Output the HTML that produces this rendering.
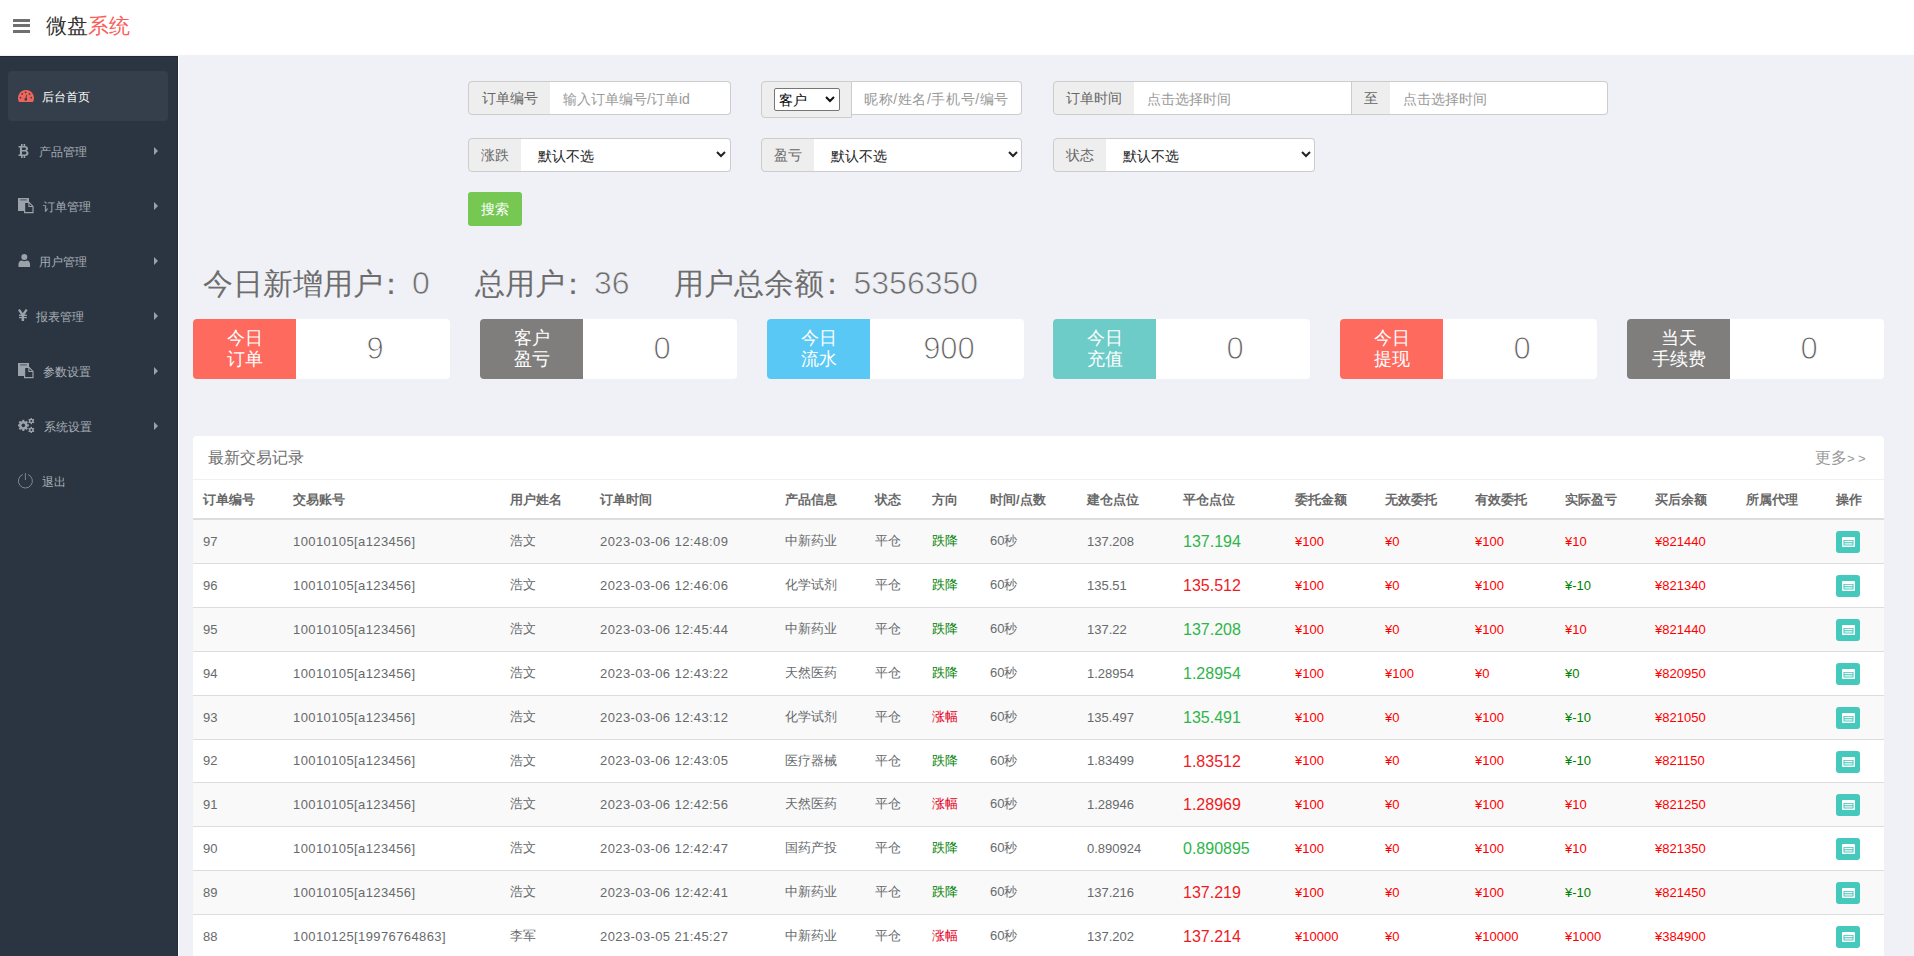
<!DOCTYPE html>
<html><head><meta charset="utf-8">
<style>
*{box-sizing:border-box;margin:0;padding:0}
html,body{width:1914px;height:956px;overflow:hidden;background:#f0f1f6;font-family:"Liberation Sans",sans-serif;color:#676a6c}
.a{position:absolute;white-space:nowrap}
#hdr{position:absolute;left:0;top:0;width:1914px;height:55px;background:#fff}
#hb{position:absolute;left:13px;top:19px;width:17px;height:14px}
#hb i{position:absolute;left:0;width:17px;height:3px;background:#707070}
#logo{position:absolute;left:46px;top:12px;font-size:21px;line-height:28px;color:#333;white-space:nowrap}
#logo span{color:#fb5d5a}
#side{position:absolute;left:0;top:56px;width:178px;height:900px;background:#2a3541;border-right:1px solid #232d39;border-top:1px solid #1f2a36}
#sideline{position:absolute;left:178px;top:55px;width:1px;height:901px;background:#fff}
#act{position:absolute;left:8px;top:71px;width:160px;height:50px;background:#353f4b;border-radius:4px}
.mt{position:absolute;font-size:12px;line-height:16px;color:#a9aeb5;white-space:nowrap}
.ar{position:absolute;left:154px;width:0;height:0;border-left:4px solid #9ba1a9;border-top:4px solid transparent;border-bottom:4px solid transparent}
.ic{position:absolute}
/* filters */
.ad{position:absolute;background:#eee;border:1px solid #ccc;border-radius:4px 0 0 4px;font-size:14px;line-height:20px;color:#666;text-align:center;padding-top:6px}
.in{position:absolute;background:#fff;border:1px solid #ccc;border-left:0;border-radius:0 4px 4px 0;font-size:14px;line-height:20px;color:#999;padding-top:7px;white-space:nowrap}
.in.sq{border-radius:0}
.sel{color:#222}
.chev{position:absolute;top:12px}
#btn{position:absolute;left:468px;top:192px;width:54px;height:34px;background:#76c853;border-radius:3px;color:#fff;font-size:14px;line-height:20px;text-align:center;padding-top:7px}
/* stats */
#stat .cl{font-style:normal;position:relative;left:-7px}
#stat .nm{position:absolute;top:-1px;font-weight:normal;font-size:32px;letter-spacing:0;-webkit-text-stroke:0.7px #f0f1f6}
#stat{position:absolute;left:203px;top:264px;font-size:30px;line-height:40px;color:#6d6d6d;white-space:nowrap}
.card{position:absolute;top:319px;width:257px;height:60px;background:#fff;border-radius:4px;overflow:hidden}
.card .lb{position:absolute;left:0;top:0;width:103px;height:60px;color:#fff;font-size:18px;line-height:20.5px;text-align:center;padding-top:9px}
.card .vl{position:absolute;left:105px;top:0;width:154px;height:60px;font-size:31px;line-height:60px;text-align:center;color:#606060;font-weight:normal;-webkit-text-stroke:1px #fff}
/* table card */
#tc{position:absolute;left:193px;top:436px;width:1691px;height:560px;background:#fff;border-radius:4px}
#tt{position:absolute;left:15px;top:11px;font-size:16px;line-height:22px;color:#6f6f6f}
#more{position:absolute;left:1622px;top:11px;font-size:16px;line-height:22px;color:#999;letter-spacing:0}
#tline{position:absolute;left:0;top:43px;width:1691px;height:1px;background:#eef0f4}
#tb{position:absolute;left:0;top:44px;width:1691px;border-collapse:collapse;table-layout:fixed}
#tb th{height:39px;border-bottom:2px solid #ddd;text-align:left;padding:2px 0 0 10px;font-size:13px;font-weight:bold;color:#686868;white-space:nowrap;vertical-align:middle}
#tb td{border-bottom:1px solid #ddd;padding:0 0 0 10px;font-size:13px;color:#676a6c;white-space:nowrap;vertical-align:middle}
#tb tbody tr:nth-child(odd) td{background:#f9f9f9}
.dg{color:#008000}.dr{color:#e4001b}
.cp{font-size:16px;position:relative;top:1px}.cg{color:#2eb54c}.cr{color:#ee1b24}
.ls{letter-spacing:0.4px}
.rd{color:#f00}.gd{color:#008000}
.ob{display:inline-block;width:24px;height:22px;background:#45c9bd;border-radius:3px;position:relative;top:1px;text-align:center;padding-top:6px;line-height:0}
</style></head><body>
<div id="hdr">
  <div id="hb"><i style="top:0"></i><i style="top:5px"></i><i style="top:11px"></i></div>
  <div id="logo">微盘<span>系统</span></div>
</div>
<div id="sideline"></div>
<div id="side"></div>
<div id="act"></div>
<!-- sidebar icons -->
<svg class="ic" style="left:18px;top:90px" width="16" height="12" viewBox="0 0 16 12"><path d="M1.07 12 A8 8 0 1 1 14.93 12 Z" fill="#f0655b"/><g fill="#353f4b"><circle cx="2.5" cy="7.7" r="0.85"/><circle cx="4.2" cy="3.9" r="0.85"/><circle cx="7.6" cy="2.3" r="0.85"/><circle cx="11.5" cy="3.9" r="0.85"/><circle cx="13.2" cy="7.7" r="0.85"/><circle cx="7.8" cy="9.4" r="1.3"/><path d="M7.3 9.3 L8.2 4.8 L8.9 4.9 L8.4 9.5 Z"/></g></svg>
<div class="mt" style="left:42px;top:88.5px;color:#fff">后台首页</div>

<svg class="ic" style="left:18px;top:144px" width="11" height="14" viewBox="0 0 11 14"><g fill="#9ca2aa"><rect x="3" y="0" width="1.6" height="2.5"/><rect x="5.6" y="0" width="1.6" height="2.5"/><rect x="3" y="11.5" width="1.6" height="2.5"/><rect x="5.6" y="11.5" width="1.6" height="2.5"/><path d="M0.5 2 H6.8 C9 2 10 3.2 10 4.7 C10 5.8 9.3 6.5 8.5 6.8 C9.6 7.1 10.5 8 10.5 9.3 C10.5 11 9.3 12 7.2 12 H0.5 V10.4 H1.9 V3.6 H0.5 Z M4 3.6 V6.1 H6.5 C7.4 6.1 7.9 5.6 7.9 4.85 C7.9 4.1 7.4 3.6 6.5 3.6 Z M4 7.6 V10.4 H6.9 C7.9 10.4 8.4 9.8 8.4 9 C8.4 8.2 7.9 7.6 6.9 7.6 Z"/></g></svg>
<div class="mt" style="left:38.5px;top:144px">产品管理</div>
<div class="ar" style="top:147px"></div>

<svg class="ic" style="left:18px;top:198px" width="16" height="16" viewBox="0 0 16 16"><path d="M0 0 H11 V13 H0 Z" fill="#9ca2aa"/><rect x="2.2" y="1.4" width="6.6" height="1" fill="#2a3541" opacity="0.7"/><path d="M6.6 4.4 H11 L15 8.4 V14.6 H6.6 Z" fill="#2a3541" stroke="#9ca2aa" stroke-width="1.2"/><path d="M10.9 4.6 V8.5 H14.8" fill="none" stroke="#9ca2aa" stroke-width="1.1"/></svg>
<div class="mt" style="left:42.5px;top:199px">订单管理</div>
<div class="ar" style="top:202px"></div>

<svg class="ic" style="left:18px;top:254px" width="13" height="13" viewBox="0 0 13 14"><g fill="#9ca2aa"><circle cx="6.3" cy="3.2" r="3.2"/><path d="M0 14 V11 C0 8.5 1.8 7 3.5 7 C4.4 7.6 5.3 7.9 6.3 7.9 C7.3 7.9 8.2 7.6 9.1 7 C10.8 7 12.5 8.5 12.5 11 V14 Z"/></g></svg>
<div class="mt" style="left:39px;top:254px">用户管理</div>
<div class="ar" style="top:257px"></div>

<svg class="ic" style="left:18px;top:309px" width="10" height="12" viewBox="0 0 10 12"><path d="M0.9 0.6 L4.8 6.2 L8.7 0.6" fill="none" stroke="#9ca2aa" stroke-width="2.3"/><rect x="3.6" y="5.5" width="2.5" height="6.5" fill="#9ca2aa"/><rect x="1" y="5.6" width="7.8" height="1.4" fill="#9ca2aa"/><rect x="1" y="7.9" width="7.8" height="1.3" fill="#9ca2aa"/></svg>
<div class="mt" style="left:36px;top:309px">报表管理</div>
<div class="ar" style="top:312px"></div>

<svg class="ic" style="left:18px;top:363px" width="16" height="16" viewBox="0 0 16 16"><path d="M0 0 H11 V13 H0 Z" fill="#9ca2aa"/><rect x="2.2" y="1.4" width="6.6" height="1" fill="#2a3541" opacity="0.7"/><path d="M6.6 4.4 H11 L15 8.4 V14.6 H6.6 Z" fill="#2a3541" stroke="#9ca2aa" stroke-width="1.2"/><path d="M10.9 4.6 V8.5 H14.8" fill="none" stroke="#9ca2aa" stroke-width="1.1"/></svg>
<div class="mt" style="left:43px;top:364px">参数设置</div>
<div class="ar" style="top:367px"></div>

<svg class="ic" style="left:18px;top:418px" width="17" height="15" viewBox="0 0 17 15"><g fill="#9ca2aa"><circle cx="5.3" cy="7.4" r="4.3"/><rect x="4.30" y="1.80" width="2.00" height="11.20" transform="rotate(0.0 5.30 7.40)"/><rect x="4.30" y="1.80" width="2.00" height="11.20" transform="rotate(45.0 5.30 7.40)"/><rect x="4.30" y="1.80" width="2.00" height="11.20" transform="rotate(90.0 5.30 7.40)"/><rect x="4.30" y="1.80" width="2.00" height="11.20" transform="rotate(135.0 5.30 7.40)"/><circle cx="13.3" cy="3" r="2.3"/><rect x="12.60" y="-0.20" width="1.40" height="6.40" transform="rotate(0.0 13.30 3.00)"/><rect x="12.60" y="-0.20" width="1.40" height="6.40" transform="rotate(60.0 13.30 3.00)"/><rect x="12.60" y="-0.20" width="1.40" height="6.40" transform="rotate(120.0 13.30 3.00)"/><circle cx="13.3" cy="12" r="2.3"/><rect x="12.60" y="8.80" width="1.40" height="6.40" transform="rotate(0.0 13.30 12.00)"/><rect x="12.60" y="8.80" width="1.40" height="6.40" transform="rotate(60.0 13.30 12.00)"/><rect x="12.60" y="8.80" width="1.40" height="6.40" transform="rotate(120.0 13.30 12.00)"/></g><g fill="#2a3541"><circle cx="5.3" cy="7.4" r="1.8"/><circle cx="13.3" cy="3" r="0.9"/><circle cx="13.3" cy="12" r="0.9"/></g></svg>
<div class="mt" style="left:44px;top:419px">系统设置</div>
<div class="ar" style="top:422px"></div>

<svg class="ic" style="left:18px;top:473px" width="15" height="16" viewBox="0 0 15 16"><path d="M4.78 1.51 A7 7 0 1 0 10.02 1.51" fill="none" stroke="#8a9098" stroke-width="0.9"/><path d="M7.4 0 V7" stroke="#8a9098" stroke-width="0.9"/></svg>
<div class="mt" style="left:42px;top:474px">退出</div>

<!-- filters row1 -->
<div class="ad" style="left:468px;top:81px;width:83px;height:34px">订单编号</div>
<div class="in" style="left:550px;top:81px;width:181px;height:34px;padding-left:13px">输入订单编号/订单id</div>

<div class="ad" style="left:761px;top:81px;width:91px;height:37px;border-radius:4px 0 0 4px"></div>
<div class="a" style="left:774px;top:88px;width:66px;height:23px;border:1px solid #767676;border-radius:2px;background:#fff;font-size:14px;line-height:20px;color:#000;padding:1px 0 0 4px">客户</div>
<svg class="a" style="left:825px;top:96px" width="10" height="7" viewBox="0 0 10 7"><path d="M1 1 L5 5 L9 1" fill="none" stroke="#111" stroke-width="2"/></svg>
<div class="in" style="left:852px;top:81px;width:170px;height:34px;padding-left:12px;letter-spacing:0.6px">昵称/姓名/手机号/编号</div>

<div class="ad" style="left:1053px;top:81px;width:82px;height:34px">订单时间</div>
<div class="in sq" style="left:1134px;top:81px;width:218px;height:34px;padding-left:13px">点击选择时间</div>
<div class="ad" style="left:1351px;top:81px;width:40px;height:34px;border-radius:0">至</div>
<div class="in" style="left:1390px;top:81px;width:218px;height:34px;padding-left:13px">点击选择时间</div>

<!-- filters row2 -->
<div class="ad" style="left:468px;top:138px;width:54px;height:34px">涨跌</div>
<div class="in sel" style="left:521px;top:138px;width:210px;height:34px;padding-left:17px">默认不选</div>
<svg class="a" style="left:716px;top:151px" width="10" height="7" viewBox="0 0 10 7"><path d="M1 1 L5 5 L9 1" fill="none" stroke="#222" stroke-width="2"/></svg>

<div class="ad" style="left:761px;top:138px;width:54px;height:34px">盈亏</div>
<div class="in sel" style="left:814px;top:138px;width:208px;height:34px;padding-left:17px">默认不选</div>
<svg class="a" style="left:1008px;top:151px" width="10" height="7" viewBox="0 0 10 7"><path d="M1 1 L5 5 L9 1" fill="none" stroke="#222" stroke-width="2"/></svg>

<div class="ad" style="left:1053px;top:138px;width:54px;height:34px">状态</div>
<div class="in sel" style="left:1106px;top:138px;width:209px;height:34px;padding-left:17px">默认不选</div>
<svg class="a" style="left:1301px;top:151px" width="10" height="7" viewBox="0 0 10 7"><path d="M1 1 L5 5 L9 1" fill="none" stroke="#222" stroke-width="2"/></svg>

<div id="btn">搜索</div>

<!-- stats -->
<div id="stat"><span style="position:absolute;left:0">今日新增用户<i class="cl">：</i><b class="nm" style="left:209px">0</b></span><span style="position:absolute;left:272px">总用户<i class="cl">：</i><b class="nm" style="left:119px">36</b></span><span style="position:absolute;left:471px">用户总余额<i class="cl">：</i><b class="nm" style="left:179.5px">5356350</b></span></div>

<div class="card" style="left:193px"><div class="lb" style="background:#fe6a5e">今日<br>订单</div><div class="vl">9</div></div>
<div class="card" style="left:480px"><div class="lb" style="background:#7f7e7d">客户<br>盈亏</div><div class="vl">0</div></div>
<div class="card" style="left:767px"><div class="lb" style="background:#5ac8f4">今日<br>流水</div><div class="vl">900</div></div>
<div class="card" style="left:1053px"><div class="lb" style="background:#6dcbc8">今日<br>充值</div><div class="vl">0</div></div>
<div class="card" style="left:1340px"><div class="lb" style="background:#fe6a5e">今日<br>提现</div><div class="vl">0</div></div>
<div class="card" style="left:1627px"><div class="lb" style="background:#7f7e7d">当天<br>手续费</div><div class="vl">0</div></div>

<div id="tc">
  <div id="tt">最新交易记录</div>
  <div id="more">更多<span style="font-size:13px;letter-spacing:3.5px">&gt;&gt;</span></div>
  <div id="tline"></div>
  <table id="tb"><colgroup><col style="width:90px"><col style="width:217px"><col style="width:90px"><col style="width:185px"><col style="width:90px"><col style="width:57px"><col style="width:58px"><col style="width:97px"><col style="width:96px"><col style="width:112px"><col style="width:90px"><col style="width:90px"><col style="width:90px"><col style="width:90px"><col style="width:91px"><col style="width:90px"><col style="width:58px"></colgroup><thead><tr><th>订单编号</th><th>交易账号</th><th>用户姓名</th><th>订单时间</th><th>产品信息</th><th>状态</th><th>方向</th><th>时间/点数</th><th>建仓点位</th><th>平仓点位</th><th>委托金额</th><th>无效委托</th><th>有效委托</th><th>实际盈亏</th><th>买后余额</th><th>所属代理</th><th>操作</th></tr></thead><tbody><tr style="height:44px"><td>97</td><td><span class="ls">10010105[a123456]</span></td><td>浩文</td><td><span class="ls">2023-03-06 12:48:09</span></td><td>中新药业</td><td>平仓</td><td><span class="dg">跌降</span></td><td>60秒</td><td>137.208</td><td><span class="cp cg">137.194</span></td><td><span class="rd">¥100</span></td><td><span class="rd">¥0</span></td><td><span class="rd">¥100</span></td><td><span class="rd">¥10</span></td><td><span class="rd">¥821440</span></td><td></td><td><span class="ob"><svg width="13" height="10" viewBox="0 0 13 10"><rect x="0" y="0" width="13" height="10" rx="1" fill="#fff"/><rect x="1.5" y="3" width="10" height="5.5" fill="#45c9bd"/><rect x="2.5" y="3.8" width="8" height="1.4" fill="#fff"/><rect x="2.5" y="6.2" width="8" height="1.4" fill="#e6f7f5"/></svg></span></td></tr><tr style="height:44px"><td>96</td><td><span class="ls">10010105[a123456]</span></td><td>浩文</td><td><span class="ls">2023-03-06 12:46:06</span></td><td>化学试剂</td><td>平仓</td><td><span class="dg">跌降</span></td><td>60秒</td><td>135.51</td><td><span class="cp cr">135.512</span></td><td><span class="rd">¥100</span></td><td><span class="rd">¥0</span></td><td><span class="rd">¥100</span></td><td><span class="gd">¥-10</span></td><td><span class="rd">¥821340</span></td><td></td><td><span class="ob"><svg width="13" height="10" viewBox="0 0 13 10"><rect x="0" y="0" width="13" height="10" rx="1" fill="#fff"/><rect x="1.5" y="3" width="10" height="5.5" fill="#45c9bd"/><rect x="2.5" y="3.8" width="8" height="1.4" fill="#fff"/><rect x="2.5" y="6.2" width="8" height="1.4" fill="#e6f7f5"/></svg></span></td></tr><tr style="height:44px"><td>95</td><td><span class="ls">10010105[a123456]</span></td><td>浩文</td><td><span class="ls">2023-03-06 12:45:44</span></td><td>中新药业</td><td>平仓</td><td><span class="dg">跌降</span></td><td>60秒</td><td>137.22</td><td><span class="cp cg">137.208</span></td><td><span class="rd">¥100</span></td><td><span class="rd">¥0</span></td><td><span class="rd">¥100</span></td><td><span class="rd">¥10</span></td><td><span class="rd">¥821440</span></td><td></td><td><span class="ob"><svg width="13" height="10" viewBox="0 0 13 10"><rect x="0" y="0" width="13" height="10" rx="1" fill="#fff"/><rect x="1.5" y="3" width="10" height="5.5" fill="#45c9bd"/><rect x="2.5" y="3.8" width="8" height="1.4" fill="#fff"/><rect x="2.5" y="6.2" width="8" height="1.4" fill="#e6f7f5"/></svg></span></td></tr><tr style="height:44px"><td>94</td><td><span class="ls">10010105[a123456]</span></td><td>浩文</td><td><span class="ls">2023-03-06 12:43:22</span></td><td>天然医药</td><td>平仓</td><td><span class="dg">跌降</span></td><td>60秒</td><td>1.28954</td><td><span class="cp cg">1.28954</span></td><td><span class="rd">¥100</span></td><td><span class="rd">¥100</span></td><td><span class="rd">¥0</span></td><td><span class="gd">¥0</span></td><td><span class="rd">¥820950</span></td><td></td><td><span class="ob"><svg width="13" height="10" viewBox="0 0 13 10"><rect x="0" y="0" width="13" height="10" rx="1" fill="#fff"/><rect x="1.5" y="3" width="10" height="5.5" fill="#45c9bd"/><rect x="2.5" y="3.8" width="8" height="1.4" fill="#fff"/><rect x="2.5" y="6.2" width="8" height="1.4" fill="#e6f7f5"/></svg></span></td></tr><tr style="height:44px"><td>93</td><td><span class="ls">10010105[a123456]</span></td><td>浩文</td><td><span class="ls">2023-03-06 12:43:12</span></td><td>化学试剂</td><td>平仓</td><td><span class="dr">涨幅</span></td><td>60秒</td><td>135.497</td><td><span class="cp cg">135.491</span></td><td><span class="rd">¥100</span></td><td><span class="rd">¥0</span></td><td><span class="rd">¥100</span></td><td><span class="gd">¥-10</span></td><td><span class="rd">¥821050</span></td><td></td><td><span class="ob"><svg width="13" height="10" viewBox="0 0 13 10"><rect x="0" y="0" width="13" height="10" rx="1" fill="#fff"/><rect x="1.5" y="3" width="10" height="5.5" fill="#45c9bd"/><rect x="2.5" y="3.8" width="8" height="1.4" fill="#fff"/><rect x="2.5" y="6.2" width="8" height="1.4" fill="#e6f7f5"/></svg></span></td></tr><tr style="height:43px"><td>92</td><td><span class="ls">10010105[a123456]</span></td><td>浩文</td><td><span class="ls">2023-03-06 12:43:05</span></td><td>医疗器械</td><td>平仓</td><td><span class="dg">跌降</span></td><td>60秒</td><td>1.83499</td><td><span class="cp cr">1.83512</span></td><td><span class="rd">¥100</span></td><td><span class="rd">¥0</span></td><td><span class="rd">¥100</span></td><td><span class="gd">¥-10</span></td><td><span class="rd">¥821150</span></td><td></td><td><span class="ob"><svg width="13" height="10" viewBox="0 0 13 10"><rect x="0" y="0" width="13" height="10" rx="1" fill="#fff"/><rect x="1.5" y="3" width="10" height="5.5" fill="#45c9bd"/><rect x="2.5" y="3.8" width="8" height="1.4" fill="#fff"/><rect x="2.5" y="6.2" width="8" height="1.4" fill="#e6f7f5"/></svg></span></td></tr><tr style="height:44px"><td>91</td><td><span class="ls">10010105[a123456]</span></td><td>浩文</td><td><span class="ls">2023-03-06 12:42:56</span></td><td>天然医药</td><td>平仓</td><td><span class="dr">涨幅</span></td><td>60秒</td><td>1.28946</td><td><span class="cp cr">1.28969</span></td><td><span class="rd">¥100</span></td><td><span class="rd">¥0</span></td><td><span class="rd">¥100</span></td><td><span class="rd">¥10</span></td><td><span class="rd">¥821250</span></td><td></td><td><span class="ob"><svg width="13" height="10" viewBox="0 0 13 10"><rect x="0" y="0" width="13" height="10" rx="1" fill="#fff"/><rect x="1.5" y="3" width="10" height="5.5" fill="#45c9bd"/><rect x="2.5" y="3.8" width="8" height="1.4" fill="#fff"/><rect x="2.5" y="6.2" width="8" height="1.4" fill="#e6f7f5"/></svg></span></td></tr><tr style="height:44px"><td>90</td><td><span class="ls">10010105[a123456]</span></td><td>浩文</td><td><span class="ls">2023-03-06 12:42:47</span></td><td>国药产投</td><td>平仓</td><td><span class="dg">跌降</span></td><td>60秒</td><td>0.890924</td><td><span class="cp cg">0.890895</span></td><td><span class="rd">¥100</span></td><td><span class="rd">¥0</span></td><td><span class="rd">¥100</span></td><td><span class="rd">¥10</span></td><td><span class="rd">¥821350</span></td><td></td><td><span class="ob"><svg width="13" height="10" viewBox="0 0 13 10"><rect x="0" y="0" width="13" height="10" rx="1" fill="#fff"/><rect x="1.5" y="3" width="10" height="5.5" fill="#45c9bd"/><rect x="2.5" y="3.8" width="8" height="1.4" fill="#fff"/><rect x="2.5" y="6.2" width="8" height="1.4" fill="#e6f7f5"/></svg></span></td></tr><tr style="height:44px"><td>89</td><td><span class="ls">10010105[a123456]</span></td><td>浩文</td><td><span class="ls">2023-03-06 12:42:41</span></td><td>中新药业</td><td>平仓</td><td><span class="dg">跌降</span></td><td>60秒</td><td>137.216</td><td><span class="cp cr">137.219</span></td><td><span class="rd">¥100</span></td><td><span class="rd">¥0</span></td><td><span class="rd">¥100</span></td><td><span class="gd">¥-10</span></td><td><span class="rd">¥821450</span></td><td></td><td><span class="ob"><svg width="13" height="10" viewBox="0 0 13 10"><rect x="0" y="0" width="13" height="10" rx="1" fill="#fff"/><rect x="1.5" y="3" width="10" height="5.5" fill="#45c9bd"/><rect x="2.5" y="3.8" width="8" height="1.4" fill="#fff"/><rect x="2.5" y="6.2" width="8" height="1.4" fill="#e6f7f5"/></svg></span></td></tr><tr style="height:44px"><td>88</td><td><span class="ls">10010125[19976764863]</span></td><td>李军</td><td><span class="ls">2023-03-05 21:45:27</span></td><td>中新药业</td><td>平仓</td><td><span class="dr">涨幅</span></td><td>60秒</td><td>137.202</td><td><span class="cp cr">137.214</span></td><td><span class="rd">¥10000</span></td><td><span class="rd">¥0</span></td><td><span class="rd">¥10000</span></td><td><span class="rd">¥1000</span></td><td><span class="rd">¥384900</span></td><td></td><td><span class="ob"><svg width="13" height="10" viewBox="0 0 13 10"><rect x="0" y="0" width="13" height="10" rx="1" fill="#fff"/><rect x="1.5" y="3" width="10" height="5.5" fill="#45c9bd"/><rect x="2.5" y="3.8" width="8" height="1.4" fill="#fff"/><rect x="2.5" y="6.2" width="8" height="1.4" fill="#e6f7f5"/></svg></span></td></tr></tbody></table>
</div>
</body></html>
